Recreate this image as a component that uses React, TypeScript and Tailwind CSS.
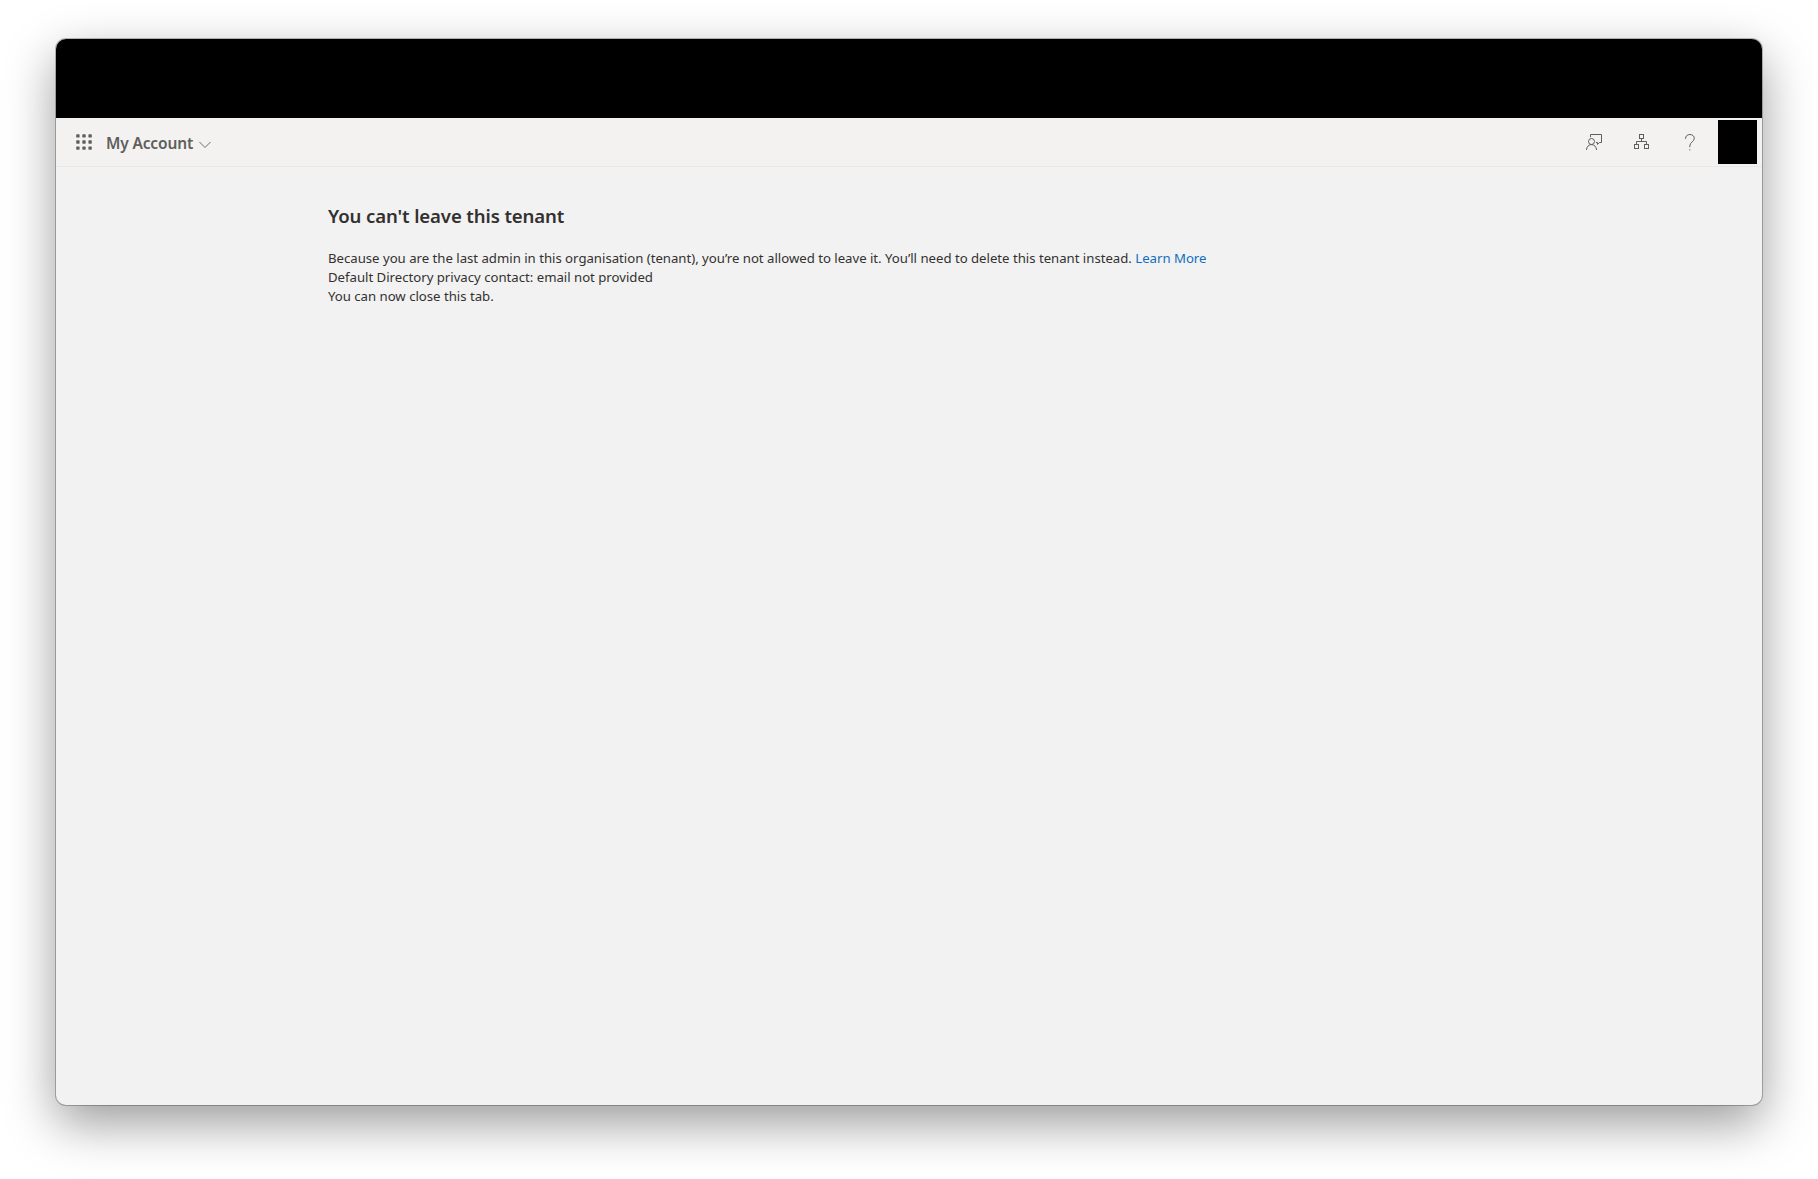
const WaffleIcon = () => (
  <svg width="16" height="16" viewBox="0 0 16 16" fill="#605e5c">
    {[0.2, 6.3, 12.4].map((y) =>
      [0.2, 6.3, 12.4].map((x) => (
        <rect key={`${x}-${y}`} x={x} y={y} width="3.4" height="3.4" rx="0.7" />
      ))
    )}
  </svg>
);

const ChevronDownIcon = () => (
  <svg width="12" height="8" viewBox="0 0 12 8" fill="none" stroke="#605e5c">
    <path d="M0.4 0.9L6 6.5L11.6 0.9" strokeWidth="0.9" />
  </svg>
);

const FeedbackIcon = () => (
  <svg width="16" height="17" viewBox="0 0 16 17" fill="none" stroke="#605e5c">
    <path d="M4.5 3.2V0.5H15.5V8.5H13.5L11.5 10.4V8.5H9.9" />
    <circle cx="5.5" cy="7.5" r="3" />
    <path d="M0.5 16C0.5 12.8 2.7 10.6 5.5 10.6S10.5 12.8 10.5 16" />
  </svg>
);

const OrganizationIcon = () => (
  <svg width="15" height="15" viewBox="0 0 15 15" fill="none" stroke="#605e5c">
    <rect x="5.5" y="0.5" width="4" height="4" />
    <rect x="0.5" y="10.5" width="4" height="4" />
    <rect x="10.5" y="10.5" width="4" height="4" />
    <path d="M7.5 4.5V7.5M2.5 10.5V7.5H12.5V10.5" />
  </svg>
);

const HelpIcon = () => (
  <svg width="10" height="17" viewBox="0 0 10 17" fill="none" stroke="#605e5c">
    <path d="M0.5 4.8C0.5 2.2 2.2 0.5 4.9 0.5S9.3 2.2 9.3 4.4C9.3 7.6 4.8 8.2 4.8 12V13.2" />
    <path d="M4.3 15.9H5.4" />
  </svg>
);

const Header = () => (
  <header className="flex h-12 items-center bg-[#f3f2f1]">
    <button className="flex h-12 w-12 items-center justify-end pr-3">
      <WaffleIcon />
    </button>
    <button className="flex items-center pt-0.5 pl-0.5 text-[#605e5c]">
      <span className="text-[15.5px] leading-5 font-semibold tracking-[-0.15px] whitespace-nowrap">My Account</span>
      <span className="mt-1 ml-1.5">
        <ChevronDownIcon />
      </span>
    </button>
    <div className="ml-auto flex items-center">
      <button className="flex h-12 w-12 items-center justify-center">
        <FeedbackIcon />
      </button>
      <button className="flex h-12 w-12 items-center justify-center pr-[1px] pb-[1px]">
        <OrganizationIcon />
      </button>
      <button className="flex h-12 w-12 items-center justify-center">
        <HelpIcon />
      </button>
      <div className="mr-[5px] ml-1 h-11 w-[39px] bg-black" />
    </div>
  </header>
);

const App = () => {
  return (
    <div className="h-[1179px] w-[1818px] overflow-hidden bg-white px-14 pt-[39px] font-['Noto_Sans',sans-serif]">
      <div className="h-[1066px] overflow-hidden rounded-[10px] bg-[#f2f2f2] shadow-[0_0_0_1px_rgba(0,0,0,0.25),0_18px_50px_rgba(0,0,0,0.4)]">
        <div className="h-[79px] bg-black" />
        <Header />
        <main className="border-t border-[#e8e8e8] pt-[35px] pl-[272px] text-[#323130]">
          <h1 className="text-[18.6px] leading-7 font-semibold tracking-[-0.12px]">You can't leave this tenant</h1>
          <div className="mt-[19px] text-[13.2px] leading-[19px] tracking-[-0.016px] whitespace-nowrap">
            <p>
              Because you are the last admin in this organisation (tenant), you’re not allowed to leave it. You’ll need to
              delete this tenant instead.{' '}
              <a href="#" className="text-[#106ebe]">
                Learn More
              </a>
            </p>
            <p>Default Directory privacy contact: email not provided</p>
            <p>You can now close this tab.</p>
          </div>
        </main>
      </div>
    </div>
  );
};

export default App;
